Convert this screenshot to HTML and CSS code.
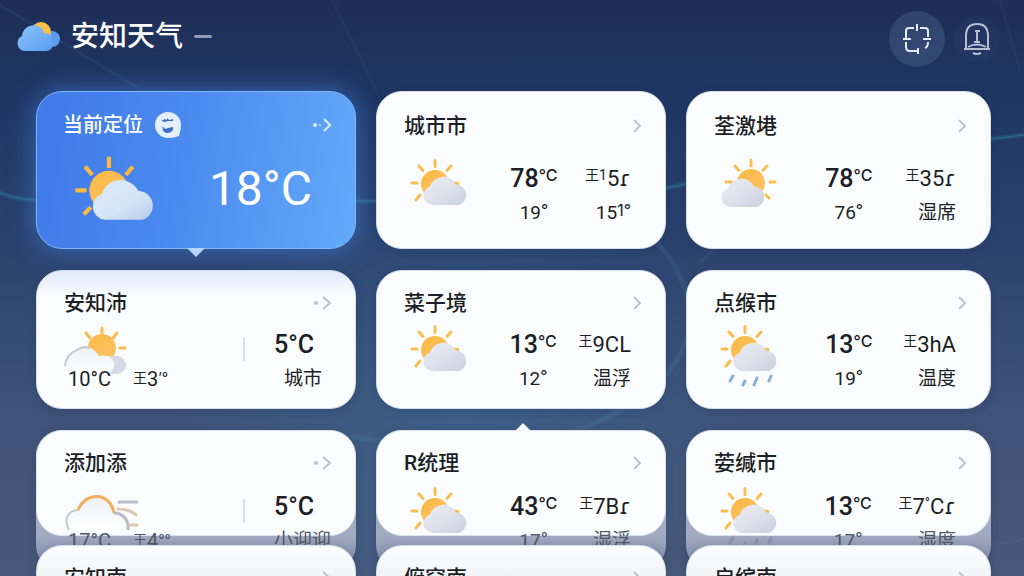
FILE: index.html
```html
<!DOCTYPE html>
<html lang="zh-CN">
<head>
<meta charset="utf-8">
<meta name="viewport" content="width=device-width, initial-scale=1">
<title>安知天气</title>
<link rel="stylesheet" href="styles.css">
</head>
<body>
<svg class="defs" width="0" height="0" aria-hidden="true">
  <defs>
    <linearGradient id="cloudFill" x1="0" y1="0" x2="1" y2="1">
      <stop offset="0" stop-color="#e9edf5"/><stop offset=".5" stop-color="#dfe2eb"/><stop offset="1" stop-color="#c9cfdf"/>
    </linearGradient>
    <linearGradient id="cloudBlue" x1="0" y1="0" x2="1" y2="1">
      <stop offset="0" stop-color="#dcecfc"/><stop offset=".6" stop-color="#d5e3f6"/><stop offset="1" stop-color="#b4cbed"/>
    </linearGradient>
    <linearGradient id="sunFill" x1="0" y1="0" x2="1" y2="1">
      <stop offset="0" stop-color="#fbb844"/><stop offset="1" stop-color="#fcc566"/>
    </linearGradient>
    <linearGradient id="brandFill" x1="0" y1="0" x2="1" y2="1">
      <stop offset="0" stop-color="#8cc4fa"/><stop offset="1" stop-color="#5a9cf0"/>
    </linearGradient>
    <linearGradient id="fadeFill" x1="0" y1="0" x2="0" y2="1">
      <stop offset="0" stop-color="#eef0f5"/><stop offset="1" stop-color="#ffffff"/>
    </linearGradient>
    <path id="cloud" d="M22 47a9.500 9.500 0 0 1-2-18.500 14 14 0 0 1 26-2 10.500 10.500 0 0 1 3 20.500z"/>
    <symbol id="sunny" viewBox="0 0 60 50">
      <g stroke="#fbbd50" stroke-width="3" stroke-linecap="round"><path d="M25 2.500v6M9 8l4 4.500M41 8l-4 4.500M2 25h5M44 25l4 .5M6 42l4-5"/></g>
      <circle cx="25" cy="26" r="14" fill="url(#sunFill)"/>
    </symbol>
    <symbol id="sun-left" viewBox="0 0 60 50"><use href="#sunny" width="60" height="50"/><use href="#cloud" fill="url(#cloudFill)"/></symbol>
    <symbol id="sun-left-blue" viewBox="0 0 60 50">
      <g stroke="#fbb93f" stroke-width="3"><path d="M25 2v8M8 9l5 6M42 9l-5 6M1 26h8M7 43l5-5"/></g>
      <circle cx="25" cy="26" r="14" fill="url(#sunFill)"/><use href="#cloud" fill="url(#cloudBlue)"/>
    </symbol>
    <symbol id="sun-right" viewBox="0 0 60 50">
      <g stroke="#fbbd50" stroke-width="3" stroke-linecap="round"><path d="M31 2v6M15 8l4 4.500M47 8l-4 4.500M6 24h6M50 24h5M46 37l3 3"/></g>
      <circle cx="31" cy="25" r="14" fill="url(#sunFill)"/><use href="#cloud" x="-12" y="2" fill="url(#cloudFill)"/>
    </symbol>
    <symbol id="rain" viewBox="0 0 60 64">
      <use href="#sunny" width="60" height="50"/><use href="#cloud" fill="url(#cloudFill)"/>
      <g stroke="currentColor" stroke-width="3" stroke-linecap="round"><path d="M13 52l-3 5M25 57l-2 4M37 54l-3 7M51 52l-2 5"/></g>
    </symbol>
    <symbol id="hidden-sun" viewBox="0 0 64 52">
      <g stroke="#fbbd50" stroke-width="3" stroke-linecap="round"><path d="M38 2v5M22 7l4 5M53 7l-4 5M56 22h5"/></g>
      <circle cx="38" cy="22" r="14" fill="url(#sunFill)"/>
      <path d="M37 30h16a9 9 0 0 1 0 18H30z" fill="#d7dae4"/>
      <path d="M4 40C1 31 7 26 13 24c8-6 17-3 22 6 7-2 15 1 15 8 0 6-4 10-9 10H8z" fill="url(#fadeFill)"/>
      <path d="M1 40C2 31 7 26 13 24c5-4 10-3 13-2" fill="none" stroke="#c5cad3" stroke-width="2"/>
    </symbol>
    <symbol id="wind" viewBox="0 0 76 40">
      <path d="M5 36C-1 25 4 16 15 16 21-2 46-3 51 19c10 1 15 8 13 17z" fill="url(#fadeFill)"/>
      <path d="M5 36C-1 25 4 16 15 16" fill="none" stroke="#c4c8d0" stroke-width="2"/>
      <path d="M14 16C21-2 46-3 50 19" fill="none" stroke="#f2ae5c" stroke-width="3"/>
      <path d="M50 19c10 0 15 8 14 17" fill="none" stroke="#b5b9c4" stroke-width="3"/>
      <path d="M55 8h18" stroke="#b9bfca" stroke-width="3" stroke-linecap="round"/>
      <path d="M54 15c8 0 14 2 18 6M66 31h7" fill="none" stroke="#d9c8b4" stroke-width="3" stroke-linecap="round"/>
    </symbol>
    <symbol id="chevron" viewBox="0 0 20 16"><path d="M12 2l6 6-6 6" fill="none" stroke="currentColor" stroke-width="2"/></symbol>
    <symbol id="dot-chevron" viewBox="0 0 20 16"><circle cx="4" cy="8" r="2" fill="currentColor"/><path d="M11 2l7 6-7 6" fill="none" stroke="currentColor" stroke-width="2"/></symbol>
  </defs>
</svg>

<svg class="backdrop" viewBox="0 0 1024 576" preserveAspectRatio="none" aria-hidden="true">
  <g fill="none" stroke-linecap="round">
    <path d="M0 193q18 8 60 8t300 0 330-18 334-48" stroke="#2f8da5" stroke-width="5" opacity=".22"/>
    <path d="M0 193q18 8 60 8t300 0 330-18 334-48" stroke="#3da3ba" stroke-width="1" opacity=".4"/>
    <path d="M0 5l140 84" stroke="#6594bd" stroke-width="3" opacity=".1"/>
    <path d="M650 235c60 60 60 140-60 190S300 420 340 440" stroke="#55b6d0" stroke-width="5" opacity=".1"/>
    <path d="M332 0l44 90M1000 0l20 70M700 262l20-18M991 545l33-6" stroke="#8fa9c8" stroke-width="3" opacity=".06"/>
  </g>
</svg>

<header class="topbar">
  <div class="brand">
    <svg class="brand-icon" viewBox="0 0 44 30" aria-hidden="true">
      <circle cx="36" cy="17" r="8" fill="#5d9cea"/><circle cx="25" cy="10" r="10" fill="#fcc047"/>
      <path d="M8 29a8 8 0 0 1-2-15C7 2 25-1 28 11c7 0 10 5 9 10 0 5-3 8-7 8z" fill="url(#brandFill)"/>
    </svg>
    <h1>安知天气</h1>
    <span class="dash"></span>
  </div>
  <nav class="actions">
    <button class="round" type="button" aria-label="定位">
      <svg width="30" height="34" viewBox="0 0 30 34" fill="none" stroke="#e4e9f3" stroke-width="2" aria-hidden="true">
        <path d="M12 6H7q-3 0-3 3v7M18 6h5q3 0 3 3v6M4 20v5q0 4 4 4h9M26 20q0 5-3 6M15 2v7M1 17h8M21 17h8M16 26v6"/>
      </svg>
    </button>
    <button class="round round-small" type="button" aria-label="通知">
      <svg width="28" height="34" viewBox="0 0 28 34" fill="none" stroke="#b5bfd4" stroke-width="2" aria-hidden="true">
        <path d="M3 26V14C3 6 7 2 14 2s11 4 11 12v12M1 27h26M5 25q9-5 18 0M10 31q4 2 8 0M12 9h5M14 9v11M11 20h6"/>
      </svg>
    </button>
  </nav>
</header>

<main class="cards">
  <article class="card current">
    <div class="card-head"><h2>当前定位</h2>
      <svg class="badge" viewBox="0 0 26 26" aria-hidden="true"><path d="M13 0a13 13 0 0 1 13 13q0 5-2 11-5 2-11 2A13 13 0 0 1 13 0z" fill="#e3efff"/><path d="M6 9l4-2 2 1V6l2 2 4-1v2h-5l-3 1zM7 14l3 3 3-1 5-1v3q-2 3-6 3-4-1-4-3z" fill="#3f6fc4"/></svg>
      <button class="more" type="button" aria-label="查看当前定位"><svg viewBox="0 0 20 16" aria-hidden="true"><circle cx="3" cy="8" r="2" fill="currentColor"/><circle cx="8" cy="8" r="1" fill="currentColor"/><path d="M12 2l6 6-6 6" fill="none" stroke="currentColor" stroke-width="2"/></svg></button>
    </div>
    <div class="now"><svg class="icon-big" aria-hidden="true"><use href="#sun-left-blue"/></svg><p>18°C</p></div>
  </article>

  <article class="card tall">
    <div class="card-head"><h2>城市市</h2><button class="more" type="button" aria-label="查看"><svg><use href="#chevron"/></svg></button></div>
    <div class="stats"><svg class="icon"><use href="#sun-left"/></svg>
      <div class="temps"><p class="value">78<small>°C</small></p><p class="minor">19<small>°</small></p></div>
      <div class="extra"><p class="code"><small>王1</small>5ɾ</p><p class="minor">15<small>1°</small></p></div></div>
  </article>

  <article class="card tall">
    <div class="card-head"><h2>荃激塂</h2><button class="more" type="button" aria-label="查看"><svg><use href="#chevron"/></svg></button></div>
    <div class="stats"><svg class="icon"><use href="#sun-right"/></svg>
      <div class="temps"><p class="value">78<small>°C</small></p><p class="minor">76<small>°</small></p></div>
      <div class="extra"><p class="code"><small>王</small>35ɾ</p><p class="minor">湿席</p></div></div>
  </article>

  <article class="card lit">
    <div class="card-head"><h2>安知沛</h2><button class="more" type="button" aria-label="查看"><svg><use href="#dot-chevron"/></svg></button></div>
    <div class="split">
      <div class="sky"><svg class="icon-sky"><use href="#hidden-sun"/></svg><p class="range"><span>10°C</span><span class="low"><small>王</small>3<small>’°</small></span></p></div>
      <div class="side"><p class="value">5°C</p><p class="minor place">城市</p></div>
    </div>
  </article>

  <article class="card">
    <div class="card-head"><h2>菜子境</h2><button class="more" type="button" aria-label="查看"><svg><use href="#chevron"/></svg></button></div>
    <div class="stats"><svg class="icon"><use href="#sun-left"/></svg>
      <div class="temps"><p class="value">13<small>°C</small></p><p class="minor">12<small>°</small></p></div>
      <div class="extra"><p class="code"><small>王</small>9CL</p><p class="minor">温浮</p></div></div>
  </article>

  <article class="card">
    <div class="card-head"><h2>点缑市</h2><button class="more" type="button" aria-label="查看"><svg><use href="#chevron"/></svg></button></div>
    <div class="stats"><svg class="icon icon-rain"><use href="#rain"/></svg>
      <div class="temps"><p class="value">13<small>°C</small></p><p class="minor">19<small>°</small></p></div>
      <div class="extra"><p class="code"><small>王</small>3hA</p><p class="minor">温度</p></div></div>
  </article>

  <article class="card folded">
    <div class="card-head"><h2>添加添</h2><button class="more" type="button" aria-label="查看"><svg><use href="#dot-chevron"/></svg></button></div>
    <div class="split">
      <div class="sky"><svg class="icon-wind"><use href="#wind"/></svg><p class="range"><span>17°C</span><span class="low"><small>王</small>4<small>°°</small></span></p></div>
      <div class="side"><p class="value">5°C</p><p class="minor">小迎迎</p></div>
    </div>
  </article>

  <article class="card folded pointed">
    <div class="card-head"><h2>R统理</h2><button class="more" type="button" aria-label="查看"><svg><use href="#chevron"/></svg></button></div>
    <div class="stats"><svg class="icon"><use href="#sun-left"/></svg>
      <div class="temps"><p class="value">43<small>°C</small></p><p class="minor">17<small>°</small></p></div>
      <div class="extra"><p class="code"><small>王</small>7Bɾ</p><p class="minor">湿浮</p></div></div>
  </article>

  <article class="card folded">
    <div class="card-head"><h2>荌缄市</h2><button class="more" type="button" aria-label="查看"><svg><use href="#chevron"/></svg></button></div>
    <div class="stats"><svg class="icon icon-rain dim"><use href="#rain"/></svg>
      <div class="temps"><p class="value">13<small>°C</small></p><p class="minor">17<small>°</small></p></div>
      <div class="extra"><p class="code"><small>王</small>7<small>°</small>Cɾ</p><p class="minor">湿度</p></div></div>
  </article>

  <article class="card next"><div class="card-head"><h2>安知南</h2><button class="more" type="button" aria-label="查看"><svg><use href="#dot-chevron"/></svg></button></div></article>
  <article class="card next"><div class="card-head"><h2>俯窍南</h2><button class="more" type="button" aria-label="查看"><svg><use href="#chevron"/></svg></button></div></article>
  <article class="card next"><div class="card-head"><h2>启缤南</h2><button class="more" type="button" aria-label="查看"><svg><use href="#chevron"/></svg></button></div></article>
</main>
</body>
</html>
```

FILE: styles.css
```css
* { box-sizing: border-box; }

html { height: 100%; }

body {
  margin: 0;
  height: 100%;
  overflow: hidden;
  position: relative;
  color: #1d1f24;
  font-family: Roboto, "Noto Sans CJK SC", "DejaVu Sans", sans-serif;
  background:
    radial-gradient(circle at 45% 75%, rgba(54, 112, 158, .4), transparent 40%),
    linear-gradient(180deg, #1d2e57 0%, #203764 18%, #2a416d 40%, #3e5278 70%, #485878 100%);
}

h1, h2, p { margin: 0; }

button {
  border: 0;
  padding: 0;
  background: none;
  color: inherit;
  cursor: pointer;
}

.defs { position: absolute; }

.backdrop {
  position: absolute;
  inset: 0;
  width: 100%;
  height: 100%;
}

.topbar {
  position: relative;
  display: flex;
  justify-content: space-between;
  align-items: center;
  padding: 11px 24px 24px 16px;
}

.brand {
  display: flex;
  align-items: center;
  gap: 11px;
  padding-bottom: 5px;
  color: #fff;
}

.brand-icon { width: 44px; height: 30px; }

.brand h1 {
  font-size: 28px;
  line-height: 36px;
  font-weight: 500;
}

.dash {
  width: 18px;
  height: 3px;
  border-radius: 2px;
  background: #8f9bb8;
}

.actions {
  display: flex;
  align-items: center;
  gap: 9px;
}

.round {
  width: 56px;
  height: 56px;
  display: grid;
  place-items: center;
  border-radius: 50%;
  background: rgba(140, 165, 205, .18);
}

.round-small {
  width: 46px;
  height: 46px;
  background: rgba(140, 165, 205, .04);
}

.cards {
  position: relative;
  display: grid;
  grid-template-columns: 320fr 290fr 305fr;
  column-gap: 20px;
  row-gap: 21px;
  padding: 0 33px 0 36px;
}

.card {
  position: relative;
  min-height: 139px;
  padding: 18px 23px 12px 27px;
  border-radius: 26px;
  border: 1px solid #d5deed;
  background: #fbfcfe;
  box-shadow: 0 2px 8px rgba(20, 35, 75, .2);
}

.tall {
  min-height: 158px;
  padding-top: 20px;
}

.lit { background: linear-gradient(180deg, #dfeafb 0, #fbfcfe 26px); }

.card-head {
  display: flex;
  align-items: center;
  height: 28px;
}

.card h2 {
  font-size: 21px;
  line-height: 28px;
  font-weight: 500;
}

.more {
  margin-left: auto;
  width: 20px;
  height: 16px;
  color: #bfc2c8;
}

.more svg {
  display: block;
  width: 20px;
  height: 16px;
}

.current {
  min-height: 158px;
  padding-top: 19px;
  padding-left: 26px;
  color: #fff;
  border-color: #80b5fa;
  background: linear-gradient(100deg, #4079e9 0%, #4b8aef 45%, #64aaf9 100%);
  box-shadow: 0 0 26px rgba(63, 133, 235, .65);
}

.current::after {
  content: "";
  position: absolute;
  top: 100%;
  left: 50%;
  margin-left: -9px;
  border: 9px solid transparent;
  border-top-color: #b5d5fb;
  border-bottom: 0;
}

.current h2 { font-size: 20px; }

.current .more { color: #dcebff; }

.badge {
  width: 26px;
  height: 26px;
  margin-left: 12px;
}

.now {
  display: flex;
  justify-content: space-between;
  align-items: center;
  padding: 14px 20px 0 11px;
}

.now p {
  font-family: "Liberation Sans Narrow", Roboto, sans-serif;
  font-size: 48px;
  line-height: 72px;
}

.icon-big { width: 84px; height: 70px; }

.stats {
  display: grid;
  grid-template-columns: 84px 9fr 5fr;
  margin-top: 11px;
  padding-right: 11px;
}

.tall .stats { margin-top: 22px; }

.icon {
  width: 60px;
  height: 50px;
  margin-left: 6px;
  margin-top: -4px;
}

.icon-rain {
  height: 64px;
  color: #8aafd8;
}

.dim { color: #8893ab; }

.temps { text-align: center; }

.extra {
  display: flex;
  flex-direction: column;
  align-items: flex-end;
}

.value, .code, .minor {
  line-height: 34px;
  white-space: nowrap;
}

.value {
  font-size: 25px;
  font-weight: 500;
}

.value small, .code small {
  font-size: 16px;
  vertical-align: 6px;
  line-height: 16px;
}

.value small, .minor small, .low small {
  font-family: Inter, "Noto Sans CJK SC", sans-serif;
}

.code { font-size: 22px; }

.code small { font-size: 14px; }

.minor { font-size: 19px; }

.minor small {
  font-size: 16px;
  vertical-align: 3px;
  line-height: 16px;
}

.split {
  display: flex;
  justify-content: space-between;
  margin-top: 11px;
}

.sky {
  display: flex;
  flex-direction: column;
}

.icon-sky {
  width: 64px;
  height: 52px;
  margin: -2px 0 -16px;
}

.icon-wind {
  width: 76px;
  height: 40px;
  margin: 4px 0 -10px;
}

.range {
  display: flex;
  gap: 22px;
  padding-left: 4px;
  font-size: 20px;
  line-height: 34px;
}

.low small { font-size: 14px; vertical-align: 3px; line-height: 16px; }

.side {
  position: relative;
  width: 89px;
  padding-left: 31px;
}

.side::before {
  content: "";
  position: absolute;
  left: 0;
  top: 9px;
  width: 2px;
  height: 24px;
  background: #dee0e5;
}

.place { padding-left: 10px; }

.folded {
  border-color: transparent;
  background: linear-gradient(180deg, #a2abc0 0, #a2abc0 104px, #7e8ba8 135px) border-box;
}

.folded::before {
  content: "";
  position: absolute;
  inset: -1px -1px 34px;
  border-radius: 26px;
  border: 1px solid #dce2ed;
  background: #fbfcfe;
}

.folded > div { position: relative; }

.folded .stats, .folded .split { margin-top: 13px; }

.folded .minor, .folded .range { color: #505766; }

.pointed::after {
  content: "";
  position: absolute;
  bottom: 100%;
  left: 50%;
  margin-left: -6px;
  border: 8px solid transparent;
  border-bottom-color: #f5f8fc;
  border-top: 0;
}

.next {
  margin-top: -47px;
  background: linear-gradient(180deg, #fcfdff, #eff1f6 40px);
}
```
